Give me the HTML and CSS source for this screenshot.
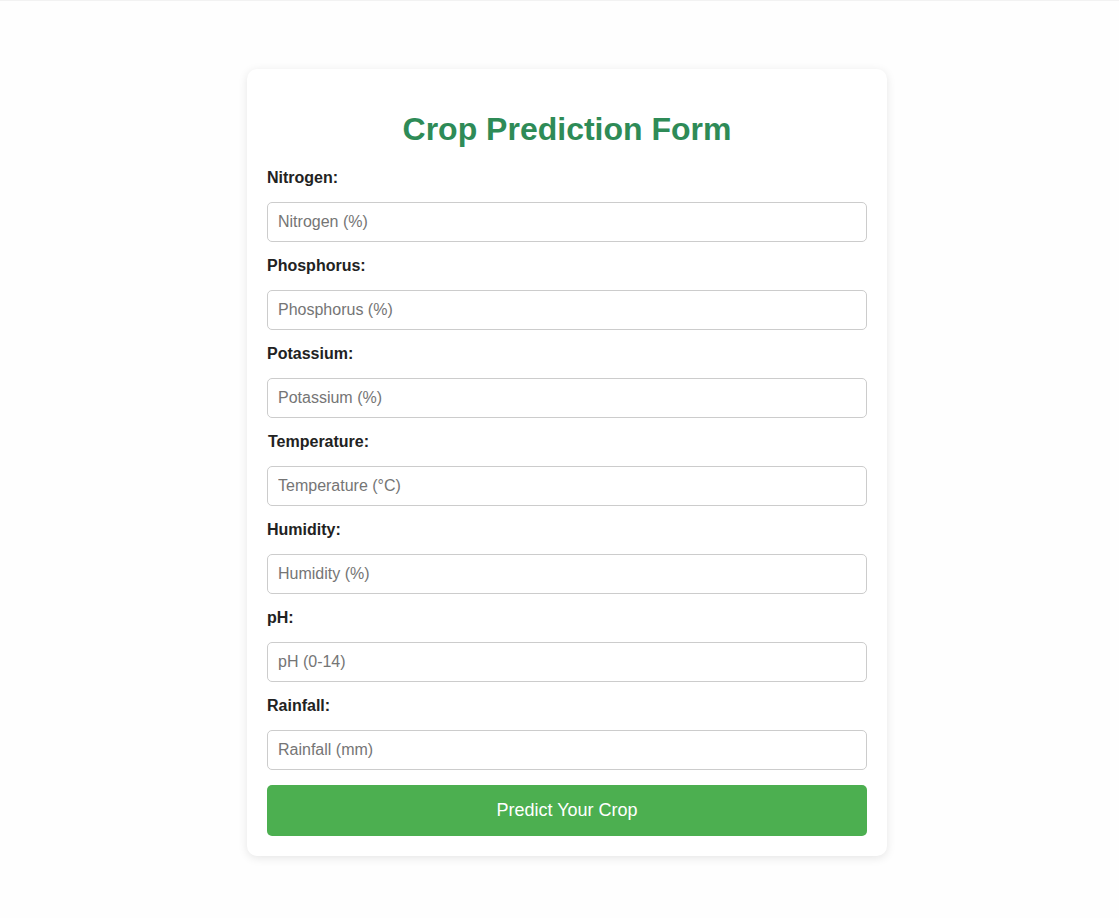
FILE: index.html
```html
<!DOCTYPE html>
<html lang="en">
<head>
<meta charset="UTF-8">
<title>Crop Prediction Form</title>
<link rel="stylesheet" href="styles.css">
</head>
<body>
<div class="page">
  <div class="card">
    <h1 class="title">Crop Prediction Form</h1>
    <form class="form">
      <label class="label" for="n">Nitrogen:</label>
      <input class="input" id="n" type="text" placeholder="Nitrogen (%)">
      <label class="label" for="p">Phosphorus:</label>
      <input class="input" id="p" type="text" placeholder="Phosphorus (%)">
      <label class="label" for="k">Potassium:</label>
      <input class="input" id="k" type="text" placeholder="Potassium (%)">
      <label class="label label-t" for="t">Temperature:</label>
      <input class="input" id="t" type="text" placeholder="Temperature (°C)">
      <label class="label" for="h">Humidity:</label>
      <input class="input" id="h" type="text" placeholder="Humidity (%)">
      <label class="label" for="ph">pH:</label>
      <input class="input" id="ph" type="text" placeholder="pH (0-14)">
      <label class="label" for="r">Rainfall:</label>
      <input class="input" id="r" type="text" placeholder="Rainfall (mm)">
      <button class="button" type="button">Predict Your Crop</button>
    </form>
  </div>
</div>
</body>
</html>
```
FILE: styles.css
```css
html, body {
  margin: 0;
  padding: 0;
  background: #fefefe;
}
body {
  font-family: "Liberation Sans", Arial, sans-serif;
  color: #222;
  border-top: 1px solid #f2f2f2;
}
.page {
  display: flex;
  justify-content: center;
  padding: 68px 0 40px 15px;
}
.card {
  width: 600px;
  padding: 20px;
  background: #fff;
  border-radius: 10px;
  box-shadow: 0 2px 10px rgba(0, 0, 0, 0.1);
}
.title {
  margin: 22.4px 0 20.5px;
  font-size: 32px;
  line-height: 37px;
  font-weight: bold;
  color: #2e8b57;
  text-align: center;
}
.form {
  display: flex;
  flex-direction: column;
}
.label {
  display: block;
  font-size: 16px;
  line-height: 18px;
  font-weight: bold;
  color: #222;
  margin-bottom: 15px;
}
.label-t {
  padding-left: 1px;
}
.input {
  box-sizing: border-box;
  width: 100%;
  height: 40px;
  padding: 10px;
  margin: 0 0 15px 0;
  font-family: "Liberation Sans", Arial, sans-serif;
  font-size: 16px;
  color: #222;
  border: 1px solid #ccc;
  border-radius: 5px;
  background: #fff;
  outline: none;
}
.input::placeholder {
  color: #757575;
}
.button {
  width: 100%;
  height: 51px;
  font-family: "Liberation Sans", Arial, sans-serif;
  font-size: 18px;
  color: #fff;
  background: #4caf50;
  border: none;
  border-radius: 5px;
  cursor: pointer;
}
```
